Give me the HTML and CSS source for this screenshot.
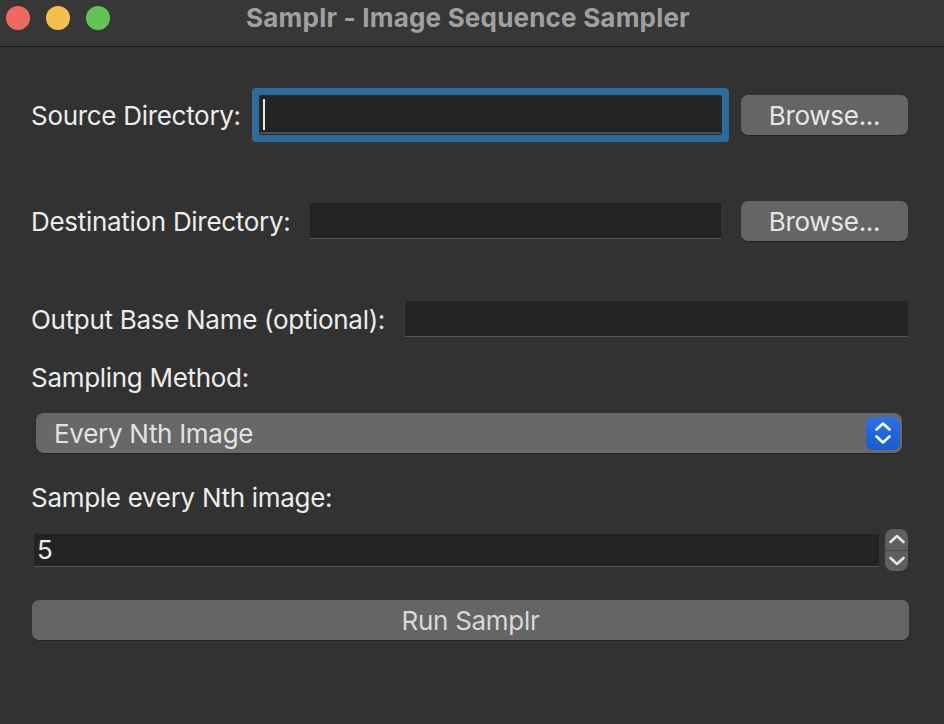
FILE: index.html
```html
<!DOCTYPE html>
<html>
<head>
<meta charset="utf-8">
<link rel="stylesheet" href="styles.css">
</head>
<body>
<div class="window">
  <div class="titlebar">
    <div class="lights">
      <span class="light red"></span>
      <span class="light yellow"></span>
      <span class="light green"></span>
    </div>
    <div class="title">Samplr - Image Sequence Sampler</div>
  </div>
  <div class="content">
    <div class="row row1">
      <label class="label">Source Directory:</label>
      <div class="field focused"><span class="caret"></span></div>
      <button class="btn browse">Browse...</button>
    </div>
    <div class="row row2">
      <label class="label">Destination Directory:</label>
      <div class="field f2"></div>
      <button class="btn browse">Browse...</button>
    </div>
    <div class="row row3">
      <label class="label">Output Base Name (optional):</label>
      <div class="field f3"></div>
    </div>
    <div class="label solo l1">Sampling Method:</div>
    <div class="select">
      <span class="select-text">Every Nth Image</span>
      <span class="stepper">
        <svg width="18" height="26" viewBox="0 0 18 26"><path d="M2.5 9.5 L9 3.5 L15.5 9.5" fill="none" stroke="#fff" stroke-width="2.6" stroke-linecap="round" stroke-linejoin="round"/><path d="M2.5 16.5 L9 22.5 L15.5 16.5" fill="none" stroke="#fff" stroke-width="2.6" stroke-linecap="round" stroke-linejoin="round"/></svg>
      </span>
    </div>
    <div class="label solo l2">Sample every Nth image:</div>
    <div class="spinrow">
      <div class="field spinfield">5</div>
      <div class="spin">
        <div class="spin-up"><svg width="18" height="12" viewBox="0 0 18 12"><path d="M2.5 9 L9 3 L15.5 9" fill="none" stroke="#e4e4e4" stroke-width="2.6" stroke-linecap="round" stroke-linejoin="round"/></svg></div>
        <div class="spin-down"><svg width="18" height="12" viewBox="0 0 18 12"><path d="M2.5 3 L9 9 L15.5 3" fill="none" stroke="#e4e4e4" stroke-width="2.6" stroke-linecap="round" stroke-linejoin="round"/></svg></div>
      </div>
    </div>
    <button class="btn run">Run Samplr</button>
  </div>
</div>
</body>
</html>
```
FILE: styles.css
```css
* { box-sizing: border-box; }
html, body { margin: 0; padding: 0; background: #323232; }
body {
  width: 944px;
  height: 724px;
  overflow: hidden;
  font-family: Inter, "Noto Sans", sans-serif;
}
.window { width: 944px; height: 724px; background: #323232; }
.titlebar {
  height: 47px;
  background: #373737;
  border-bottom: 1px solid #1c1c1c;
  display: flex;
  align-items: center;
  position: relative;
}
.lights { display: flex; gap: 16px; padding-left: 6px; margin-top: -10px; }
.light { width: 24px; height: 24px; border-radius: 50%; display: block; }
.red { background: #ed6a5e; }
.yellow { background: #f5bf4f; }
.green { background: #61c554; }
.title {
  position: absolute;
  left: 0; right: 0; top: 0;
  height: 46px;
  line-height: 36px;
  text-align: center;
  padding-right: 8px;
  font-size: 26px;
  font-weight: 700;
  letter-spacing: 0.2px;
  color: #a0a0a0;
}
.content {
  padding: 0 36px 0 31px;
  display: flex;
  flex-direction: column;
}
.row { display: flex; align-items: center; gap: 20px; }
.row1 { height: 56px; margin-top: 40px; }
.row2 { height: 40px; margin-top: 58px; }
.row3 { height: 36px; margin-top: 60px; }
.label {
  font-size: 26px;
  letter-spacing: -0.3px;
  color: #ececec;
  white-space: nowrap;
}
.field {
  flex: 1;
  background: #232323;
  border-bottom: 1px solid #555;
  position: relative;
}
.focused {
  height: 38px;
  margin-left: -1px;
  border-bottom: 2px solid #4f4f4f;
  border-radius: 1px;
  box-shadow: 0 0 0 1px #2a2a2a, 0 0 0 8px #2a6c9a;
}
.caret {
  position: absolute;
  left: 3px; top: 3px;
  width: 2px; height: 31px;
  background: #e6e6e6;
}
.f2 { height: 36px; }
.f3 { height: 36px; }
.btn {
  font-family: inherit;
  background: #656565;
  color: #e6e6e6;
  border: none;
  border-radius: 7px;
  font-size: 26px;
  letter-spacing: -0.3px;
  box-shadow: 0 1px 1px rgba(0,0,0,0.3);
  padding: 0;
}
.browse { width: 167px; height: 40px; flex: none; }
.solo { height: 26px; line-height: 26px; }
.l1 { margin-top: 28px; }
.select {
  margin: 22px 6px 0 5px;
  height: 40px;
  background: #686868;
  border-radius: 8px;
  display: flex;
  align-items: center;
  justify-content: space-between;
  padding: 0 2px 0 18px;
  box-shadow: 0 1px 1px rgba(0,0,0,0.3);
}
.select-text { font-size: 26px; color: #e2e2e2; letter-spacing: -0.3px; }
.stepper {
  width: 34px;
  height: 33px;
  border-radius: 7px;
  background: linear-gradient(#2b70e8, #1a5cce);
  display: flex;
  align-items: center;
  justify-content: center;
}
.l2 { margin-top: 32px; }
.spinrow {
  margin-top: 18px;
  height: 42px;
  display: flex;
  align-items: center;
  gap: 6px;
}
.spinfield {
  margin-left: 3px;
  height: 33px;
  font-size: 26px;
  color: #ececec;
  line-height: 32px;
  padding-left: 3px;
}
.spin {
  width: 23px;
  height: 42px;
  background: #5f5f5f;
  border-radius: 8px;
  display: flex;
  flex-direction: column;
}
.spin-up, .spin-down {
  flex: 1;
  display: flex;
  align-items: center;
  justify-content: center;
}
.spin-up { border-bottom: 1px solid #4a4a4a; }
.run {
  margin-top: 29px;
  height: 40px;
  width: 100%;
  color: #d8d8d8;
  margin-left: 1px;
}
```
